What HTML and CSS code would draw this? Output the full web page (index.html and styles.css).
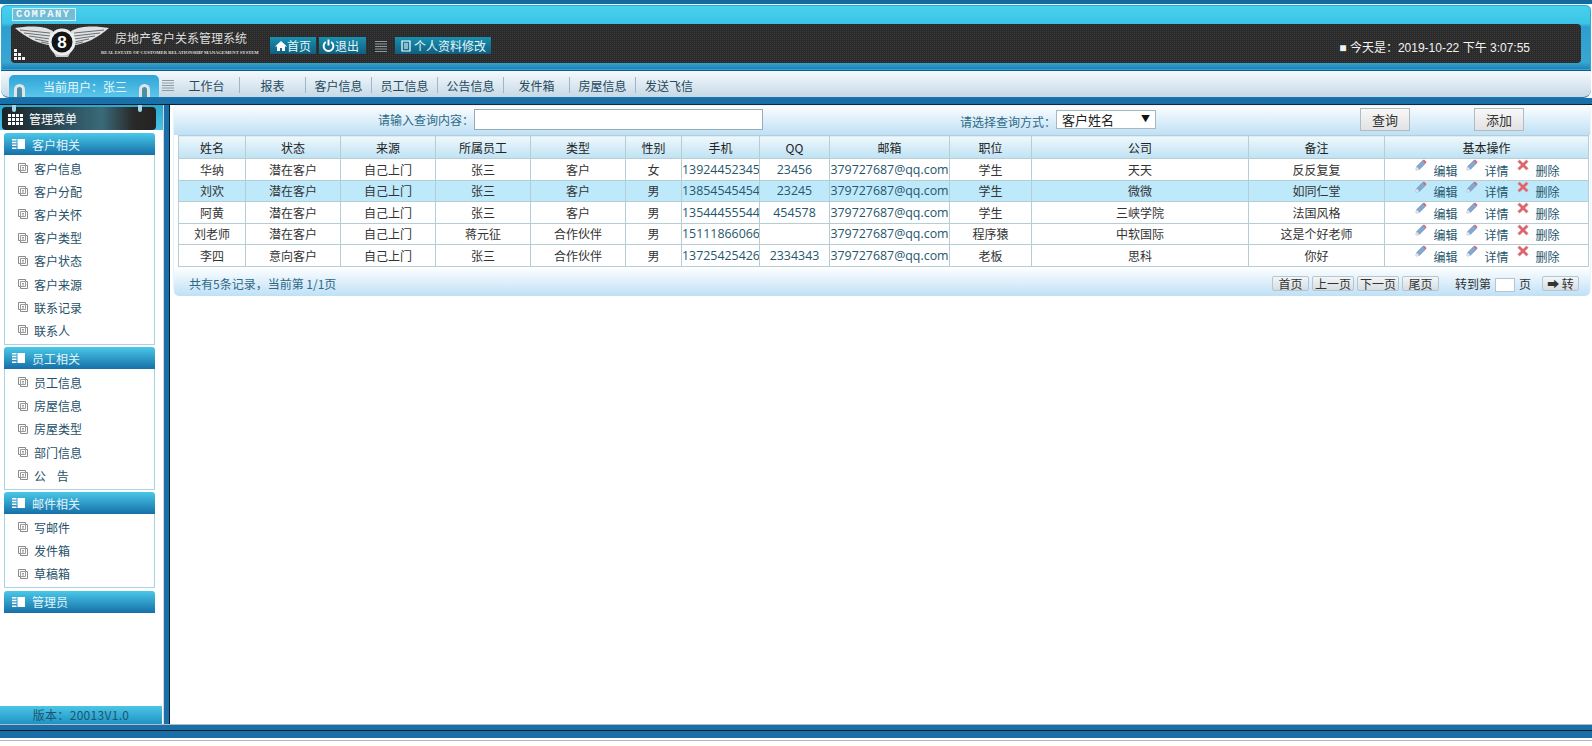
FILE: index.html
```html
<!DOCTYPE html>
<html>
<head>
    <meta charset="UTF-8">
    <title>房地产客户关系管理系统</title>
    <link rel="stylesheet" href="styles.css">
</head>
<body>
    <svg class="sprite" width="0" height="0">
        <symbol id="i-pencil" viewBox="0 0 12 12">
            <path d="M1 11 L1.6 7.6 L7.6 1.6 L10.4 4.4 L4.4 10.4 Z" fill="#86a8cf" stroke="#6c8fb8" stroke-width=".6"/>
            <path d="M7.6 1.6 L9 .4 L11.6 3 L10.4 4.4 Z" fill="#d0697e"/>
            <path d="M1 11 L1.6 7.6 L4.4 10.4 Z" fill="#e8edf4"/>
        </symbol>
        <symbol id="i-cross" viewBox="0 0 12 12">
            <path d="M2.6 .8 L6 4 L9.4 .8 L11.4 2.8 L8 6 L11.4 9.2 L9.4 11.2 L6 8 L2.6 11.2 L.6 9.2 L4 6 L.6 2.8 Z" fill="#e4626c" stroke="#c8c0c0" stroke-width=".5"/>
        </symbol>
        <symbol id="i-doc" viewBox="0 0 10 10">
            <path d="M.5 .5 H7.5 V2.5 H9.5 V9.5 H2.5 V7.5 H.5 Z" fill="#fff" stroke="#8a8a8a"/>
            <path d="M2.5 2.5 H7.5 V7.5 H2.5 Z M4 4.5 H6 M4 6 H6" fill="none" stroke="#9a9a9a"/>
        </symbol>
        <symbol id="i-book" viewBox="0 0 13 10">
            <path d="M0 0 H4.500 V1.500 H0 Z M0 2.800 H4.500 V4.300 H0 Z M0 5.600 H4.500 V7 H0 Z M0 8.400 H4.500 V10 H0 Z M5.500 0 H13 V10 H5.500 Z" fill="#fff"/>
        </symbol>
        <symbol id="i-grip" viewBox="0 0 12 12">
            <path d="M0 1.500 H12 M0 4 H12 M0 6.500 H12 M0 9 H12 M0 11.500 H12" stroke="#8f9aa0" stroke-width="1"/>
        </symbol>
    </svg>

    <div class="top-strip"></div>
    <div class="header">
        <div class="company">COMPANY</div>
        <div class="header-panel">
            <span class="grid-mark"><i></i><i></i><i></i><i></i><i></i><i></i></span>
            <svg class="logo" viewBox="0 0 97 36" width="97" height="36">
                <g id="wing">
                    <path d="M2 4 C14 2 30 1 40 7 L38 21 C27 21 12 13 2 4 Z" fill="#dfe2e3"/>
                    <path d="M7 6 L37 9 M11 9 L37 12 M16 12 L37 15 M22 15 L37 18 M28 18 L38 20" stroke="#4c5053" stroke-width=".8"/>
                </g>
                <use href="#wing" transform="matrix(-1 0 0 1 98 0)"/>
                <path d="M37 22 C41 30 57 30 61 22 L55 33 L43 33 Z" fill="#c4c8ca"/>
                <circle cx="49" cy="18" r="13.500" fill="#eceeef"/>
                <circle cx="49" cy="18" r="10.500" fill="#141414"/>
                <text x="49" y="24" class="logo-letter" text-anchor="middle">8</text>
            </svg>
            <div class="brand">
                <div class="brand-cn">房地产客户关系管理系统</div>
                <div class="brand-en">REAL ESTATE OF CUSTOMER RELATIONSHIP MANAGEMENT SYSTEM</div>
            </div>
            <a class="head-btn btn-home"><svg viewBox="0 0 12 12" width="12" height="12"><path d="M6 1 L12 6.500 H10 V11 H7 V8 H5 V11 H2 V6.500 H0 Z" fill="#fff"/></svg>首页</a>
            <a class="head-btn btn-exit"><svg viewBox="0 0 12 12" width="13" height="13"><path d="M3.500 2.800 A4.500 4.500 0 1 0 8.500 2.800 M6 .5 V6" fill="none" stroke="#fff" stroke-width="1.800"/></svg>退出</a>
            <svg class="grip head-grip"><use href="#i-grip"/></svg>
            <a class="head-btn btn-profile"><svg viewBox="0 0 12 12" width="12" height="12"><path d="M2 1 H10 V11 H2 Z M4 4 H8 M4 6 H8 M4 8 H8" fill="none" stroke="#fff" stroke-width="1.200"/></svg>个人资料修改</a>
            <div class="clock">■ 今天是：2019-10-22 下午 3:07:55</div>
        </div>
    </div>

    <div class="nav">
        <div class="user-tab">
            <span class="plug"></span>
            <span class="user-name">当前用户：张三</span>
            <span class="plug"></span>
        </div>
        <svg class="grip nav-grip"><use href="#i-grip"/></svg>
        <a class="nav-item">工作台</a>
        <a class="nav-item">报表</a>
        <a class="nav-item">客户信息</a>
        <a class="nav-item">员工信息</a>
        <a class="nav-item">公告信息</a>
        <a class="nav-item">发件箱</a>
        <a class="nav-item">房屋信息</a>
        <a class="nav-item nav-last">发送飞信</a>
    </div>
    <div class="nav-band"></div>

    <div class="middle">
        <div class="sidebar">
            <div class="menu-title">
                <span class="pin pin-left"></span>
                <span class="pin pin-right"></span>
                <div class="menu-title-box">
                    <span class="dots"><i></i><i></i><i></i><i></i><i></i><i></i><i></i><i></i><i></i><i></i><i></i><i></i></span>
                    管理菜单
                </div>
            </div>
            <div class="menu-groups">
                <div class="group-head"><svg class="book"><use href="#i-book"/></svg>客户相关</div>
                <ul class="group-list">
                    <li><svg class="doc"><use href="#i-doc"/></svg>客户信息</li>
                    <li><svg class="doc"><use href="#i-doc"/></svg>客户分配</li>
                    <li><svg class="doc"><use href="#i-doc"/></svg>客户关怀</li>
                    <li><svg class="doc"><use href="#i-doc"/></svg>客户类型</li>
                    <li><svg class="doc"><use href="#i-doc"/></svg>客户状态</li>
                    <li><svg class="doc"><use href="#i-doc"/></svg>客户来源</li>
                    <li><svg class="doc"><use href="#i-doc"/></svg>联系记录</li>
                    <li><svg class="doc"><use href="#i-doc"/></svg>联系人</li>
                </ul>
                <div class="group-head"><svg class="book"><use href="#i-book"/></svg>员工相关</div>
                <ul class="group-list">
                    <li><svg class="doc"><use href="#i-doc"/></svg>员工信息</li>
                    <li><svg class="doc"><use href="#i-doc"/></svg>房屋信息</li>
                    <li><svg class="doc"><use href="#i-doc"/></svg>房屋类型</li>
                    <li><svg class="doc"><use href="#i-doc"/></svg>部门信息</li>
                    <li><svg class="doc"><use href="#i-doc"/></svg>公&nbsp;&nbsp;&nbsp;&nbsp;告</li>
                </ul>
                <div class="group-head"><svg class="book"><use href="#i-book"/></svg>邮件相关</div>
                <ul class="group-list">
                    <li><svg class="doc"><use href="#i-doc"/></svg>写邮件</li>
                    <li><svg class="doc"><use href="#i-doc"/></svg>发件箱</li>
                    <li><svg class="doc"><use href="#i-doc"/></svg>草稿箱</li>
                </ul>
                <div class="group-head"><svg class="book"><use href="#i-book"/></svg>管理员</div>
            </div>
            <div class="version">版本：20013V1.0</div>
        </div>
        <div class="splitter"></div>

        <div class="main">
            <div class="panel">
                <div class="search-bar">
                    <label class="search-label">请输入查询内容：</label>
                    <input class="search-input" type="text">
                    <label class="search-label way-label">请选择查询方式：</label>
                    <div class="way-select">客户姓名<span class="arrow">▼</span></div>
                    <button class="search-btn query-btn">查询</button>
                    <button class="search-btn add-btn">添加</button>
                </div>
                <table class="data-table">
                    <thead>
                        <tr>
                            <th class="c-name">姓名</th><th class="c-std">状态</th><th class="c-std">来源</th><th class="c-std">所属员工</th><th class="c-std">类型</th><th class="c-sex">性别</th><th class="c-phone">手机</th><th class="c-qq">QQ</th><th class="c-mail">邮箱</th><th class="c-job">职位</th><th class="c-company">公司</th><th class="c-note">备注</th><th>基本操作</th>
                        </tr>
                    </thead>
                    <tbody>
                        <tr>
                            <td>华纳</td><td>潜在客户</td><td>自己上门</td><td>张三</td><td>客户</td><td>女</td><td class="num">13924452345</td><td class="num">23456</td><td class="num">379727687@qq.com</td><td>学生</td><td>天天</td><td>反反复复</td>
                            <td class="ops"><svg class="op-icon"><use href="#i-pencil"/></svg><a>编辑</a><svg class="op-icon"><use href="#i-pencil"/></svg><a>详情</a><svg class="op-icon"><use href="#i-cross"/></svg><a>删除</a></td>
                        </tr>
                        <tr class="row-on">
                            <td>刘欢</td><td>潜在客户</td><td>自己上门</td><td>张三</td><td>客户</td><td>男</td><td class="num">13854545454</td><td class="num">23245</td><td class="num">379727687@qq.com</td><td>学生</td><td>微微</td><td>如同仁堂</td>
                            <td class="ops"><svg class="op-icon"><use href="#i-pencil"/></svg><a>编辑</a><svg class="op-icon"><use href="#i-pencil"/></svg><a>详情</a><svg class="op-icon"><use href="#i-cross"/></svg><a>删除</a></td>
                        </tr>
                        <tr>
                            <td>阿黄</td><td>潜在客户</td><td>自己上门</td><td>张三</td><td>客户</td><td>男</td><td class="num">13544455544</td><td class="num">454578</td><td class="num">379727687@qq.com</td><td>学生</td><td>三峡学院</td><td>法国风格</td>
                            <td class="ops"><svg class="op-icon"><use href="#i-pencil"/></svg><a>编辑</a><svg class="op-icon"><use href="#i-pencil"/></svg><a>详情</a><svg class="op-icon"><use href="#i-cross"/></svg><a>删除</a></td>
                        </tr>
                        <tr>
                            <td>刘老师</td><td>潜在客户</td><td>自己上门</td><td>蒋元征</td><td>合作伙伴</td><td>男</td><td class="num">15111866066</td><td class="num"></td><td class="num">379727687@qq.com</td><td>程序猿</td><td>中软国际</td><td>这是个好老师</td>
                            <td class="ops"><svg class="op-icon"><use href="#i-pencil"/></svg><a>编辑</a><svg class="op-icon"><use href="#i-pencil"/></svg><a>详情</a><svg class="op-icon"><use href="#i-cross"/></svg><a>删除</a></td>
                        </tr>
                        <tr>
                            <td>李四</td><td>意向客户</td><td>自己上门</td><td>张三</td><td>合作伙伴</td><td>男</td><td class="num">13725425426</td><td class="num">2334343</td><td class="num">379727687@qq.com</td><td>老板</td><td>思科</td><td>你好</td>
                            <td class="ops"><svg class="op-icon"><use href="#i-pencil"/></svg><a>编辑</a><svg class="op-icon"><use href="#i-pencil"/></svg><a>详情</a><svg class="op-icon"><use href="#i-cross"/></svg><a>删除</a></td>
                        </tr>
                    </tbody>
                </table>
                <div class="pager">
                    <span class="pager-info">共有5条记录，当前第 1/1页</span>
                    <button class="page-btn">首页</button>
                    <button class="page-btn page-btn-wide">上一页</button>
                    <button class="page-btn page-btn-wide">下一页</button>
                    <button class="page-btn">尾页</button>
                    <span class="goto">转到第</span>
                    <input class="goto-input" type="text">
                    <span class="goto-unit">页</span>
                    <button class="page-btn go-btn">➡ 转</button>
                </div>
            </div>
        </div>
    </div>

    <div class="foot-band"></div>
    <div class="foot-end"></div>
</body>
</html>
```

FILE: styles.css
```css
* {
    box-sizing: border-box;
}

body {
    margin: 0;
    height: 746px;
    overflow: hidden;
    display: flex;
    flex-direction: column;
    font-family: "Noto Sans CJK SC", "Liberation Sans", sans-serif;
    font-size: 12px;
    color: #333;
    background: #fff;
}

.sprite {
    position: absolute;
}

/* top header */
.top-strip {
    height: 4px;
    flex: none;
    background: #15699c;
}

.header {
    height: 67px;
    flex: none;
    margin: 0 1px;
    padding: 3px 10px 0;
    border-top: 1px solid #e6f6fb;
    border-radius: 6px 6px 0 0;
    background: linear-gradient(#49d2ee 0%, #3cc4e6 28%, #2c9fd0 34%, #3aa6d2 88%, #1c7cb2 100%);
    border-bottom: 1px solid #0f5d85;
    box-shadow: inset 0 0 0 1px #2fa6d3;
}

.company {
    width: 64px;
    height: 13px;
    margin: 0 0 3px 1px;
    padding-left: 3px;
    border: 1px solid #cdeff8;
    background: #72bcd6;
    color: #eef8fc;
    font: bold 10.500px/11px "Liberation Mono", monospace;
    letter-spacing: 1.500px;
    overflow: hidden;
}

.header-panel {
    position: relative;
    height: 39px;
    display: flex;
    align-items: flex-start;
    border-radius: 4px;
    background-color: #333;
    background-image:
        repeating-linear-gradient(90deg, #2a2a2a 0 1px, transparent 1px 2px),
        repeating-linear-gradient(0deg, #2c2c2c 0 1px, #3a3a3a 1px 2px);
    color: #e8e8e8;
}

.grid-mark {
    position: absolute;
    left: 3px;
    top: 25px;
    display: grid;
    grid-template-columns: repeat(3, 3px);
    gap: 1px;
}

.grid-mark i {
    height: 3px;
    background: #f2f2f2;
}

.grid-mark i:nth-child(1),
.grid-mark i:nth-child(2),
.grid-mark i:nth-child(4) {
    grid-column: 1;
}

.logo {
    margin: 0 0 0 2px;
    flex: none;
}

.logo-letter {
    font: bold 17px "Liberation Sans", sans-serif;
    fill: #fff;
}

.brand {
    width: 169px;
    margin-left: -9px;
    flex: none;
}

.brand-cn {
    margin: 5px 0 0 14px;
    line-height: 17px;
    color: #ddd;
}

.brand-en {
    margin-top: 3px;
    font: bold 4.600px/7px "Liberation Serif", serif;
    white-space: nowrap;
    color: #ddd;
}

.head-btn {
    height: 17px;
    margin-top: 13px;
    display: flex;
    align-items: center;
    background: linear-gradient(#1a90b0, #0f5f80);
    color: #e6f6fa;
    line-height: 17px;
}

.btn-home {
    width: 46px;
    padding-left: 5px;
}

.btn-exit {
    width: 47px;
    margin-left: 3px;
    padding-left: 3px;
}

.btn-profile {
    width: 96px;
    margin-left: 8px;
    padding-left: 5px;
    gap: 2px;
}

.grip {
    width: 12px;
    height: 12px;
    flex: none;
}

.head-grip {
    margin: 16px 0 0 9px;
}

.clock {
    position: absolute;
    right: 51px;
    top: 15px;
    line-height: 18px;
    font-family: "Liberation Sans", "Noto Sans CJK SC", sans-serif;
    color: #f2f2f2;
}

/* second bar */
.nav {
    height: 27px;
    flex: none;
    margin: 0 1px;
    padding-left: 8px;
    display: flex;
    align-items: stretch;
    border-radius: 0 0 8px 8px;
    background: linear-gradient(#f5f9fe, #c6d9e6);
    border-bottom: 1px solid #1a7ab0;
}

.user-tab {
    width: 150px;
    margin-top: 4px;
    padding: 0 9px 0 5px;
    display: flex;
    align-items: flex-end;
    justify-content: space-between;
    border-radius: 5px 5px 0 0;
    background: linear-gradient(#2da5d6, #5cc5ea);
    color: #e8f7fd;
}

.user-name {
    align-self: center;
    margin-left: 6px;
}

.plug {
    width: 11px;
    height: 13px;
    border: 3px solid #dfe6e8;
    border-bottom: 0;
    border-radius: 6px 6px 0 0;
    background: #4f8ea8;
}

.nav-grip {
    width: 12px;
    height: 14px;
    margin: 7px 0 0 3px;
}

.nav-item {
    width: 66px;
    margin: 6px 0 4px;
    border-right: 1px solid #9fb6c6;
    text-align: center;
    line-height: 17px;
    color: #26495c;
}

.nav-last {
    border-right: 0;
}

.nav-band {
    height: 7px;
    flex: none;
    background: #1a6fa8;
    border-bottom: 1px solid #0a2030;
}

/* middle */
.middle {
    flex: 1;
    min-height: 0;
    display: flex;
    border-bottom: 1px solid #b5b9bd;
}

.sidebar {
    width: 163px;
    flex: none;
    display: flex;
    flex-direction: column;
}

.menu-title {
    position: relative;
    height: 25px;
    flex: none;
    padding: 2px 7px 0 2px;
    background: linear-gradient(#2aa7d2, #49c1e4);
}

.menu-title-box {
    height: 23px;
    display: flex;
    align-items: center;
    gap: 6px;
    padding-left: 6px;
    border-radius: 4px;
    background: linear-gradient(90deg, #1c2226 0%, #2e5462 45%, #3a6a78 65%, #2a2a2a 85%, #222 100%);
    color: #fff;
}

.dots {
    width: 15px;
    margin-top: 2px;
    display: flex;
    flex-wrap: wrap;
    gap: 1px;
}

.dots i {
    width: 3px;
    height: 3px;
    background: #fff;
}

.pin {
    position: absolute;
    top: 0;
    width: 4px;
    height: 7px;
    z-index: 1;
    border-radius: 0 0 2px 2px;
    background: #9dd9ea;
}

.pin-left {
    left: 12px;
}

.pin-right {
    left: 138px;
}

.menu-groups {
    flex: 1;
    min-height: 0;
    padding: 3px 8px 0 4px;
}

.group-head {
    height: 22px;
    padding-left: 8px;
    display: flex;
    align-items: center;
    gap: 7px;
    border-radius: 3px 3px 0 0;
    background: linear-gradient(#4ac8e8, #1570a8);
    color: #e0f5fb;
}

.book {
    width: 13px;
    height: 10px;
    flex: none;
}

.group-list {
    margin: 0 0 2.400px;
    padding: 1.500px 0 2px;
    list-style: none;
    border: 1px solid #a9d3e0;
    border-top: 0;
}

.group-list li {
    height: 23.200px;
    padding-left: 13px;
    display: flex;
    align-items: center;
    gap: 6px;
    color: #1f5068;
}

.doc {
    width: 10px;
    height: 10px;
    flex: none;
}

.version {
    height: 18px;
    flex: none;
    margin-right: 1px;
    text-align: center;
    line-height: 17px;
    letter-spacing: .3px;
    background: linear-gradient(#4cc6e6, #1f93c4);
    color: #1d5570;
}

.splitter {
    width: 7px;
    flex: none;
    border-left: 1px solid #cfd8dc;
    border-right: 1px solid #08202e;
    background: #1a6fa8;
}

/* main area */
.main {
    flex: 1;
    min-width: 0;
    padding: 1px 2px 0 4px;
}

.panel {
    height: 187px;
    border-radius: 5px;
    border-bottom: 1px solid #b9d4e4;
    box-shadow: 0 0 2px #b9d4e4;
    background: #fff;
}

.search-bar {
    height: 29px;
    padding: 3px 0 0 204px;
    display: flex;
    align-items: flex-start;
    border-radius: 5px 5px 0 0;
    background: linear-gradient(#fbfdff, #bfe0f6);
}

.search-label {
    line-height: 22px;
    color: #2c6a85;
}

.search-input {
    width: 289px;
    height: 21px;
    margin: 0;
    padding: 0;
    border: 1px solid #93aebb;
    background: #fff;
}

.way-label {
    margin: 2px 0 0 197px;
}

.way-select {
    position: relative;
    width: 100px;
    height: 19px;
    margin: 1px 0 0;
    padding-left: 5px;
    border: 1px solid #a8b8c0;
    background: #fff;
    font-size: 13px;
    line-height: 18px;
    color: #222;
}

.arrow {
    position: absolute;
    right: 5px;
    top: -1px;
    font-size: 9px;
    color: #111;
}

.search-btn {
    width: 50px;
    height: 23px;
    margin-top: -1px;
    padding: 0;
    border: 1px solid #b0bcc4;
    background: linear-gradient(#f8f8f8, #e2e2e2);
    font: 13px "Noto Sans CJK SC", sans-serif;
    color: #333;
}

.query-btn {
    margin-left: 204px;
}

.add-btn {
    margin-left: 64px;
}

.data-table {
    width: 1411px;
    margin-left: 4px;
    table-layout: fixed;
    border-collapse: collapse;
}

.data-table th,
.data-table td {
    padding: 0;
    border: 1px solid #b7cdd6;
    text-align: center;
    font-weight: normal;
    white-space: nowrap;
}

.data-table th {
    height: 23px;
    background: linear-gradient(#eff8fc, #bfe2f4);
    color: #222;
}

.data-table td {
    height: 21px;
    background: #fff;
    color: #333;
    line-height: 19px;
}

.data-table .row-on td {
    background: #bde9fb;
}

.c-name { width: 67px; }
.c-std { width: 95px; }
.c-sex { width: 56px; }
.c-phone { width: 78px; }
.c-qq { width: 70px; }
.c-mail { width: 120px; }
.c-job { width: 82px; }
.c-company { width: 217px; }
.c-note { width: 136px; }

.data-table td.num {
    font-family: "Open Sans", sans-serif;
    font-size: 12.400px;
    color: #26566c;
    overflow: hidden;
}

.data-table td.ops {
    padding-left: 30px;
    text-align: left;
}

.op-icon {
    width: 12px;
    height: 12px;
    vertical-align: 4.500px;
    margin-right: 6.500px;
}

.ops a {
    margin-right: 8.500px;
    color: #26566c;
}

.pager {
    height: 29px;
    padding: 8px 0 0 15px;
    display: flex;
    align-items: flex-start;
    border-radius: 0 0 5px 5px;
    background: linear-gradient(#fff, #bfe0f6);
}

.pager-info {
    width: 1083px;
    flex: none;
    line-height: 18px;
    color: #2c6a85;
}

.page-btn {
    width: 37px;
    height: 15px;
    margin: 1px 3px 0 0;
    padding: 0;
    border: 1px solid #b4c6d0;
    border-radius: 2px;
    background: linear-gradient(#f4f6f8, #d6dde2);
    font: 12px/13px "Noto Sans CJK SC", sans-serif;
    color: #333;
}

.page-btn-wide {
    width: 42px;
}

.goto {
    margin-left: 13px;
    line-height: 18px;
    color: #333;
}

.goto-input {
    width: 20px;
    height: 14px;
    margin: 3px 4px 0;
    padding: 0;
    border: 1px solid #b4c6d0;
    background: #fff;
}

.goto-unit {
    line-height: 18px;
}

.go-btn {
    margin-left: 11px;
}

/* bottom */
.foot-band {
    height: 13px;
    background: linear-gradient(#1a6fa8 0 5px, #08202e 5px 6px, #1a6fa8 6px);
    flex: none;
}

.foot-end {
    height: 8px;
    flex: none;
    background: linear-gradient(#fff 0 2px, #b5b9bd 2px 3px, #fff 3px);
}
```
